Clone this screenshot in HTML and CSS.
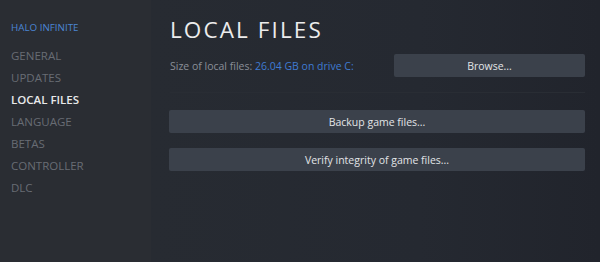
FILE: index.html
```html
<!DOCTYPE html>
<html>
<head>
<meta charset="utf-8">
<link rel="stylesheet" href="styles.css">
</head>
<body>
<div class="app">
  <nav class="sidebar">
    <div class="game">HALO INFINITE</div>
    <ul class="menu">
      <li>GENERAL</li>
      <li>UPDATES</li>
      <li class="active">LOCAL FILES</li>
      <li>LANGUAGE</li>
      <li>BETAS</li>
      <li>CONTROLLER</li>
      <li>DLC</li>
    </ul>
  </nav>
  <main class="content">
    <h1 class="title">LOCAL FILES</h1>
    <div class="size-row">
      <div class="size">Size of local files: <span class="link">26.04 GB on drive C:</span></div>
      <button class="btn browse">Browse...</button>
    </div>
    <button class="btn wide">Backup game files...</button>
    <button class="btn wide">Verify integrity of game files...</button>
  </main>
</div>
</body>
</html>
```
FILE: styles.css
```css
html, body {
  margin: 0;
  padding: 0;
  width: 600px;
  height: 262px;
  overflow: hidden;
  background: #252930;
  font-family: "Open Sans", "Lato", sans-serif;
}
.app {
  display: flex;
  height: 262px;
}
.sidebar {
  width: 151px;
  flex: none;
  background: #2a2d33;
  padding-top: 21px;
  box-sizing: border-box;
}
.game {
  color: #4a85d3;
  font-size: 9.8px;
  padding-left: 11px;
  line-height: 14px;
  margin-bottom: 10px;
}
.menu {
  list-style: none;
  margin: 0;
  padding: 0;
}
.menu li {
  padding-left: 11px;
  color: #686c74;
  font-size: 11.5px;
  line-height: 22px;
  height: 22px;
}
.menu li.active {
  color: #e8e9ea;
  font-weight: 600;
}
.content {
  flex: 1;
  background: linear-gradient(90deg, #272b32 0%, #252931 60%, #21242c 100%);
  padding: 15px 15px 0 19px;
  box-sizing: border-box;
  display: flex;
  flex-direction: column;
}
.title {
  margin: 0;
  font-weight: 400;
  font-size: 22.5px;
  letter-spacing: 2.1px;
  color: #ececec;
  line-height: 30px;
  height: 30px;
}
.size-row {
  display: flex;
  align-items: center;
  justify-content: space-between;
  margin-top: 9px;
  padding-bottom: 15px;
  border-bottom: 1px solid #292d34;
}
.size {
  color: #8a8f98;
  font-size: 10.5px;
}
.link {
  color: #3f7bd2;
}
.btn {
  background: #3b414b;
  border: none;
  color: #e2e4e7;
  font-family: inherit;
  font-size: 10.5px;
  height: 23px;
  padding: 0;
  border-radius: 2px;
}
.browse {
  width: 191px;
}
.wide {
  width: 416px;
  margin-left: -1px;
  margin-top: 17px;
}
.wide + .wide {
  margin-top: 15px;
}
```
